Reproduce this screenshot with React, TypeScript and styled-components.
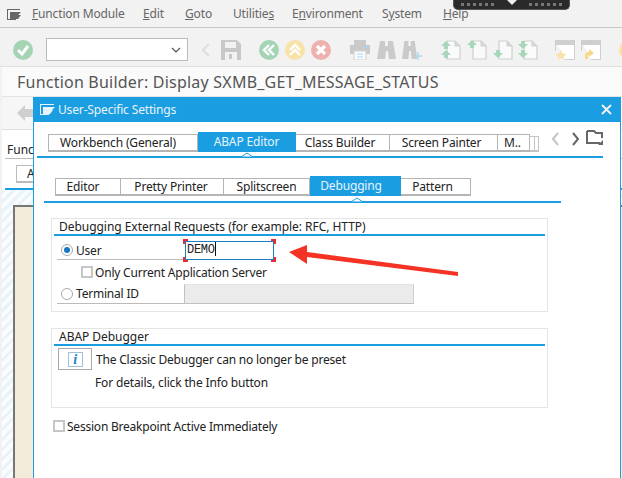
import React from 'react';
import styled, { createGlobalStyle } from 'styled-components';

const GlobalStyle = createGlobalStyle`
  html, body { margin: 0; padding: 0; background: #fff; }
  * { box-sizing: border-box; }
`;

const FONT = '"Noto Sans", "Open Sans", sans-serif';
const BLUE = '#1b9de2';

const Page = styled.div`
  position: relative;
  width: 622px;
  height: 478px;
  overflow: hidden;
  background: #f2f2f2;
  font-family: ${FONT};
  font-size: 12px;
  color: #222;
`;

const MenuBar = styled.div`
  display: flex;
  align-items: center;
  height: 28px;
  padding-left: 6px;
  border-bottom: 1px solid #c8c8c8;
  color: #666;
  letter-spacing: -0.15px;
`;

const MenuIcon = styled.svg`
  width: 16px;
  height: 12px;
  margin-right: 10px;
`;

const MenuItem = styled.span<{ $w: number }>`
  width: ${(p) => p.$w}px;
  white-space: nowrap;
  & u { text-underline-offset: 1px; }
`;

const ToolBar = styled.div`
  display: flex;
  align-items: center;
  height: 39px;
  padding: 5px 0 0 13px;
  border-bottom: 1px solid #e0e0e0;
`;

const ToolSlot = styled.svg<{ $ml?: number; $w?: number }>`
  flex: none;
  width: ${(p) => p.$w ?? 20}px;
  height: 20px;
  margin-left: ${(p) => p.$ml ?? 0}px;
`;

const Combo = styled.div`
  display: flex;
  align-items: center;
  justify-content: flex-end;
  flex: none;
  width: 142px;
  height: 23px;
  margin-left: 13px;
  padding-right: 6px;
  background: #fff;
  border: 1px solid #bbb;
`;

const TitleBar = styled.div`
  height: 30px;
  margin-left: 2px;
  padding: 4px 0 0 15px;
  background: #fafafa;
  border-bottom: 1px solid #e4e4e4;
  font-size: 16px;
  line-height: 22px;
  letter-spacing: 0.22px;
  color: #555;
  white-space: nowrap;
`;

const AppBar = styled.div`
  display: flex;
  align-items: center;
  height: 33px;
  margin-left: 2px;
  padding: 0 0 1px 15px;
  background: #f6f6f6;
  border-bottom: 1px solid #e0e0e0;
`;

const BackArrow = styled.svg`
  width: 20px;
  height: 16px;
`;

const BehindPanel = styled.div`
  height: 60px;
  margin-left: 2px;
  padding: 12px 0 0 3px;
  background: #fff;
`;

const BehindLabel = styled.div`
  height: 17px;
  padding-left: 2px;
  line-height: 16px;
  border-bottom: 1px solid #bbb;
  white-space: nowrap;
  overflow: hidden;
`;

const BehindButton = styled.div`
  width: 40px;
  height: 18px;
  margin: 6px 0 0 11px;
  padding-left: 10px;
  line-height: 15px;
  background: #fff;
  border: 1px solid #bbb;
  border-bottom-width: 2px;
`;

const BehindRule = styled.div`
  height: 2px;
  margin-top: 5px;
  background: ${BLUE};
`;

const HatchArea = styled.div`
  height: 288px;
  margin-left: 2px;
  padding: 15px 0 0 11px;
  background: repeating-linear-gradient(135deg, #e9f3fa 0 3px, #fbfcfe 3px 7px);
`;

const EditorBox = styled.div`
  height: 273px;
  background: #f2ebd9;
  border-top: 2px solid #777;
  border-left: 2px solid #777;
`;

const Handle = styled.div`
  position: absolute;
  top: 0;
  left: 453px;
  display: flex;
  align-items: flex-start;
  justify-content: center;
  gap: 12px;
  width: 117px;
  height: 10px;
  padding-top: 3px;
  background: #2a2a2a;
  border: 1px solid #555;
  border-top: none;
  border-radius: 0 0 5px 5px;
`;

const HandleDots = styled.span`
  width: 34px;
  height: 3px;
  background: repeating-linear-gradient(90deg, #777 0 3px, transparent 3px 6px);
`;

const HandleNotch = styled.span`
  width: 0;
  height: 0;
  margin-top: -3px;
  border-left: 5px solid transparent;
  border-right: 5px solid transparent;
  border-top: 5px solid #eee;
`;

const Dialog = styled.div`
  position: absolute;
  top: 97px;
  left: 33px;
  width: 588px;
  height: 381px;
  background: #fff;
  border-left: 1px solid ${BLUE};
  border-right: 1px solid ${BLUE};
`;

const DialogTitle = styled.div`
  display: flex;
  align-items: center;
  height: 25px;
  margin: 0 -1px;
  padding: 0 9px 0 7px;
  background: ${BLUE};
  color: #e8f4fb;
`;

const DialogCaption = styled.span`
  flex: 1;
  margin-left: 2px;
  letter-spacing: -0.15px;
`;

const TabHeader = styled.div`
  position: relative;
  display: flex;
  align-items: flex-start;
  height: 36px;
  margin: 0 17px 0 3px;
  padding: 10px 0 0 11px;
  border-bottom: 2px solid ${BLUE};
`;

const SubHeader = styled(TabHeader)`
  width: 517px;
  height: 45px;
  margin: 0 0 0 10px;
  padding: 18px 0 0 11px;
`;

const Tab = styled.div<{ $w: number; $pr?: number; $active?: boolean }>`
  flex: none;
  width: ${(p) => p.$w}px;
  height: ${(p) => (p.$active ? 20 : 18)}px;
  margin-top: ${(p) => (p.$active ? 0 : 2)}px;
  padding-right: ${(p) => p.$pr ?? 0}px;
  line-height: ${(p) => (p.$active ? 17 : 15)}px;
  letter-spacing: -0.15px;
  text-align: center;
  white-space: nowrap;
  overflow: hidden;
  background: ${(p) => (p.$active ? BLUE : '#fff')};
  color: ${(p) => (p.$active ? '#e8f4fb' : '#222')};
  border: 1px solid ${(p) => (p.$active ? BLUE : '#b4b4b4')};
  border-bottom-width: 2px;
  border-left-width: 0;
  &:first-child { border-left-width: 1px; }
`;

const TabStack = styled.span`
  flex: none;
  width: 9px;
  height: 16px;
  margin-top: 4px;
  background: #fff;
  border: 1px solid #c4c4c4;
  border-left: none;
  border-bottom-width: 2px;
  box-shadow: inset -3px 0 0 #fff, inset -4px 0 0 #c4c4c4;
`;

const TabNav = styled.svg`
  position: absolute;
  top: 8px;
  left: 513px;
  width: 56px;
  height: 18px;
`;

const Notch = styled.svg<{ $x: number }>`
  position: absolute;
  bottom: -1px;
  left: ${(p) => p.$x}px;
  width: 12px;
  height: 5px;
`;

const Group = styled.div<{ $h: number; $mt: number }>`
  width: 497px;
  height: ${(p) => p.$h}px;
  margin: ${(p) => p.$mt}px 0 0 17px;
  padding: 0 2px;
  border: 1px solid #e4e4e4;
`;

const GroupTitle = styled.div`
  height: 17px;
  padding-left: 5px;
  line-height: 16px;
  letter-spacing: -0.04px;
  border-bottom: 2px solid ${BLUE};
  white-space: nowrap;
`;

const Row = styled.div<{ $h: number; $inset?: boolean; $end?: boolean }>`
  display: flex;
  align-items: ${(p) => (p.$end ? 'flex-end' : 'center')};
  height: ${(p) => p.$h}px;
  padding-left: ${(p) => (p.$inset ? 3 : 0)}px;
  letter-spacing: -0.2px;
  white-space: nowrap;
`;

const LabelCell = styled.div<{ $pt?: number }>`
  display: flex;
  align-items: center;
  align-self: stretch;
  gap: 3px;
  flex: none;
  width: 127px;
  padding: ${(p) => p.$pt ?? 0}px 0 0 4px;
  border-bottom: 1px solid #bbb;
`;

const Radio = styled.span<{ $on?: boolean }>`
  flex: none;
  display: flex;
  align-items: center;
  justify-content: center;
  width: 12px;
  height: 12px;
  background: #fff;
  border: 1px solid #aaa;
  border-radius: 50%;
  &::after {
    content: '';
    width: 6px;
    height: 6px;
    border-radius: 50%;
    background: ${(p) => (p.$on ? '#1777c4' : 'transparent')};
  }
`;

const Check = styled.span<{ $ml?: number }>`
  flex: none;
  width: 12px;
  height: 12px;
  margin: 0 2px 0 ${(p) => p.$ml ?? 0}px;
  background: #fff;
  border: 2px solid #c6c6c6;
`;

const InputWrap = styled.div`
  position: relative;
  flex: none;
  width: 89px;
  height: 19px;
  margin-left: 1px;
  padding-left: 1px;
  border: 1px solid #1b7fc4;
  font-family: "Liberation Mono", monospace;
  line-height: 17px;
  letter-spacing: -0.3px;
`;

const Cursor = styled.span`
  display: inline-block;
  width: 1px;
  height: 14px;
  vertical-align: -3px;
  background: #111;
`;

const Corner = styled.span<{ $top?: boolean; $left?: boolean }>`
  position: absolute;
  width: 5px;
  height: 5px;
  ${(p) => (p.$top ? 'top: -3px;' : 'bottom: -3px;')}
  ${(p) => (p.$left ? 'left: -3px;' : 'right: -3px;')}
  border: 0 solid #ea2a32;
  ${(p) => (p.$top ? 'border-top-width: 2px;' : 'border-bottom-width: 2px;')}
  ${(p) => (p.$left ? 'border-left-width: 2px;' : 'border-right-width: 2px;')}
`;

const DisabledField = styled.div`
  flex: none;
  width: 230px;
  height: 20px;
  background: #ebebeb;
  border: 1px solid #c0c0c0;
  border-top-color: #e4e4e4;
  border-right-color: #d0d0d0;
`;

const InfoButton = styled.div`
  flex: none;
  display: flex;
  align-items: center;
  justify-content: center;
  width: 34px;
  height: 22px;
  margin: 0 4px 0 1px;
  background: #fff;
  border: 1px solid #aaa;
`;

const InfoGlyph = styled.span`
  display: block;
  width: 15px;
  height: 15px;
  border: 1px solid #9cc0de;
  font-family: "Liberation Serif", serif;
  font-style: italic;
  font-weight: 700;
  font-size: 14px;
  line-height: 13px;
  text-align: center;
  color: #1b7fc4;
`;

const DetailText = styled.div`
  height: 21px;
  padding-left: 41px;
  line-height: 22px;
  letter-spacing: -0.15px;
`;

const SessionRow = styled.div`
  display: flex;
  align-items: center;
  height: 16px;
  margin: 10px 0 0 19px;
  letter-spacing: -0.22px;
  white-space: nowrap;
`;

const ArrowOverlay = styled.svg`
  position: absolute;
  top: 235px;
  left: 280px;
  width: 190px;
  height: 50px;
  pointer-events: none;
`;

function DocArrows({ up, down, ml }: { up?: number[]; down?: number[]; ml?: number }) {
  return (
    <ToolSlot viewBox="0 0 20 20" $ml={ml}>
      <path d="M6 1h8l5 5v13H6z" fill="#fafafa" stroke="#cfcfcf" strokeWidth="1.2" />
      <path d="M14 1v5h5" fill="#d8d8d8" stroke="#cfcfcf" />
      {up?.map((y) => (
        <path key={`u${y}`} d={`M5 ${y}l5 5H7v3H3v-3H0z`} fill="#a8d6b8" />
      ))}
      {down?.map((y) => (
        <path key={`d${y}`} d={`M3 ${y}h4v3h3l-5 5-5-5h3z`} fill="#a8d6b8" />
      ))}
    </ToolSlot>
  );
}

function Binoculars({ ml, plus }: { ml?: number; plus?: boolean }) {
  return (
    <ToolSlot viewBox="0 0 20 20" $ml={ml}>
      <path d="M3 1h5v5h3V1h5l3 18h-7l-1-8H9l-1 8H0z" fill="#cacaca" transform={plus ? 'scale(.8 1)' : undefined} />
      {plus && <path d="M16 12v8M12 16h8" stroke="#a9d7f2" strokeWidth="1.3" />}
    </ToolSlot>
  );
}

function WindowIcon({ ml, star }: { ml?: number; star?: boolean }) {
  return (
    <ToolSlot viewBox="0 0 20 20" $ml={ml}>
      <path d="M.5 1h19v18.5H10" fill="#fff" stroke="#cfcfcf" />
      <path d="M.5 1v10" stroke="#cfcfcf" />
      <rect x="0" y="0" width="20" height="5" fill="#cfcfcf" />
      {star ? (
        <path d="M6 10l1.7 3.5 3.8.4-2.8 2.6.8 3.7L6 18l-3.5 2 .8-3.7L.5 13.9l3.8-.4z" fill="#f7e2a8" />
      ) : (
        <path d="M4 19v-5l2-2h2V9l5 4-5 4v-2H7v4z" fill="#f7d98e" />
      )}
    </ToolSlot>
  );
}

export default function App() {
  return (
    <Page>
      <GlobalStyle />
      <MenuBar>
        <MenuIcon viewBox="0 0 16 12">
          <path d="M1 1h13v1H2v9h8v1H1z" fill="#666" />
          <path d="M4 4h11l-3 3 3 0-3 4H4z" fill="#666" />
        </MenuIcon>
        <MenuItem $w={111}><u>F</u>unction Module</MenuItem>
        <MenuItem $w={42}><u>E</u>dit</MenuItem>
        <MenuItem $w={48}><u>G</u>oto</MenuItem>
        <MenuItem $w={59}>Utilitie<u>s</u></MenuItem>
        <MenuItem $w={90}>E<u>n</u>vironment</MenuItem>
        <MenuItem $w={61}>S<u>y</u>stem</MenuItem>
        <MenuItem $w={40}><u>H</u>elp</MenuItem>
      </MenuBar>

      <ToolBar>
        <ToolSlot viewBox="0 0 20 20">
          <circle cx="10" cy="10" r="10" fill="#a5d4b5" />
          <path d="M5 10l4 4 6-8" fill="none" stroke="#fff" strokeWidth="3" />
        </ToolSlot>
        <Combo>
          <svg width="10" height="6" viewBox="0 0 10 6">
            <path d="M1 1l4 4 4-4" fill="none" stroke="#555" strokeWidth="1.2" />
          </svg>
        </Combo>
        <ToolSlot viewBox="0 0 8 20" $ml={14} $w={8}>
          <path d="M7 4L1 10l6 6" fill="none" stroke="#ddd" strokeWidth="2" />
        </ToolSlot>
        <ToolSlot viewBox="0 0 20 20" $ml={11}>
          <path d="M0 0h16l4 4v16H0z" fill="#c8c8c8" />
          <rect x="4" y="2" width="11" height="6" fill="#f2f2f2" />
          <rect x="4" y="12" width="12" height="8" fill="#f2f2f2" />
          <rect x="8" y="14" width="3" height="5" fill="#c8c8c8" />
        </ToolSlot>
        <ToolSlot viewBox="0 0 20 20" $ml={18}>
          <circle cx="10" cy="10" r="10" fill="#a5d4b5" />
          <path d="M10 5l-5 5 5 5M15 5l-5 5 5 5" fill="none" stroke="#fff" strokeWidth="2.4" />
        </ToolSlot>
        <ToolSlot viewBox="0 0 20 20" $ml={6}>
          <circle cx="10" cy="10" r="10" fill="#f7e2a8" />
          <path d="M5 10l5-5 5 5M5 15l5-5 5 5" fill="none" stroke="#fff" strokeWidth="2.4" />
        </ToolSlot>
        <ToolSlot viewBox="0 0 20 20" $ml={6}>
          <circle cx="10" cy="10" r="10" fill="#eeb1ae" />
          <path d="M6 6l8 8M14 6l-8 8" fill="none" stroke="#fff" strokeWidth="3.2" />
        </ToolSlot>
        <ToolSlot viewBox="0 0 20 20" $ml={19}>
          <rect x="4" y="0" width="12" height="5" fill="#cacaca" />
          <rect x="0" y="5" width="20" height="9" fill="#cacaca" />
          <rect x="4" y="11" width="12" height="9" fill="#fafafa" stroke="#cfcfcf" />
          <path d="M7 14h6M7 17h6" stroke="#a9d7f2" />
          <rect x="15" y="6" width="4" height="2" fill="#a9d7f2" />
        </ToolSlot>
        <Binoculars ml={7} />
        <Binoculars ml={5} plus />
        <DocArrows ml={19} up={[1, 10]} />
        <DocArrows ml={6} up={[0]} />
        <DocArrows ml={6} down={[10]} />
        <DocArrows ml={5} down={[1, 10]} />
        <WindowIcon ml={17} star />
        <WindowIcon ml={6} />
        <ToolSlot viewBox="0 0 20 20" $ml={18}>
          <circle cx="10" cy="10" r="10" fill="#f7e2a8" />
        </ToolSlot>
      </ToolBar>

      <TitleBar>Function Builder: Display SXMB_GET_MESSAGE_STATUS</TitleBar>

      <AppBar>
        <BackArrow viewBox="0 0 20 16">
          <path d="M0 8l8-8v4h12v8H8v4z" fill="#cfcfcf" />
        </BackArrow>
      </AppBar>
      <BehindPanel>
        <BehindLabel>Function</BehindLabel>
        <BehindButton>A</BehindButton>
        <BehindRule />
      </BehindPanel>
      <HatchArea>
        <EditorBox />
      </HatchArea>

      <Handle>
        <HandleDots />
        <HandleNotch />
        <HandleDots />
      </Handle>

      <Dialog>
        <DialogTitle>
          <svg width="16" height="11" viewBox="0 0 16 11">
            <path d="M0 0h14v1H1v9h8v1H0z" fill="#e8f4fb" />
            <path d="M3 3h12l-3 3h1l-3 4H3z" fill="#e8f4fb" />
          </svg>
          <DialogCaption>User-Specific Settings</DialogCaption>
          <svg width="11" height="11" viewBox="0 0 11 11">
            <path d="M1 1l9 9M10 1l-9 9" stroke="#f0f0f0" strokeWidth="2" />
          </svg>
        </DialogTitle>

        <TabHeader>
          <Tab $w={150} $pr={10}>Workbench (General)</Tab>
          <Tab $w={98} $active>ABAP Editor</Tab>
          <Tab $w={94} $pr={5}>Class Builder</Tab>
          <Tab $w={108} $pr={4}>Screen Painter</Tab>
          <Tab $w={32} $pr={2}>M..</Tab>
          <TabStack />
          <TabNav viewBox="0 0 56 18">
            <path d="M8 3L3 9l5 6" fill="none" stroke="#c4c4c4" strokeWidth="2" />
            <path d="M23 3l5 6-5 6" fill="none" stroke="#666" strokeWidth="2" />
            <path d="M37 1h7l2 2h6v5M37 1v12h13" fill="none" stroke="#666" strokeWidth="2" />
            <path d="M53 10v5h-5z" fill="#666" />
          </TabNav>
          <Notch $x={204} viewBox="0 0 12 5">
            <path d="M0 5l6-4 6 4z" fill="#fff" stroke={BLUE} />
          </Notch>
        </TabHeader>

        <SubHeader>
          <Tab $w={66} $pr={10}>Editor</Tab>
          <Tab $w={103} $pr={2}>Pretty Printer</Tab>
          <Tab $w={86}>Splitscreen</Tab>
          <Tab $w={91} $pr={8} $active>Debugging</Tab>
          <Tab $w={70} $pr={6}>Pattern</Tab>
          <Notch $x={307} viewBox="0 0 12 5">
            <path d="M0 5l6-4 6 4z" fill="#fff" stroke={BLUE} />
          </Notch>
        </SubHeader>

        <Group $h={94} $mt={15}>
          <GroupTitle>Debugging External Requests (for example: RFC, HTTP)</GroupTitle>
          <Row $h={24} $inset $end>
            <LabelCell $pt={5}>
              <Radio $on />
              User
            </LabelCell>
            <InputWrap>
              DEMO<Cursor />
              <Corner $top $left />
              <Corner $top />
              <Corner $left />
              <Corner />
            </InputWrap>
          </Row>
          <Row $h={24}>
            <Check $ml={27} />
            Only Current Application Server
          </Row>
          <Row $h={20} $inset>
            <LabelCell>
              <Radio />
              Terminal ID
            </LabelCell>
            <DisabledField />
          </Row>
        </Group>

        <Group $h={80} $mt={16}>
          <GroupTitle>ABAP Debugger</GroupTitle>
          <Row $h={26} $inset>
            <InfoButton>
              <InfoGlyph>i</InfoGlyph>
            </InfoButton>
            The Classic Debugger can no longer be preset
          </Row>
          <DetailText>For details, click the Info button</DetailText>
        </Group>

        <SessionRow>
          <Check />
          Session Breakpoint Active Immediately
        </SessionRow>
      </Dialog>

      <ArrowOverlay viewBox="0 0 190 50">
        <path d="M9 17L27 10v7L178 37v4L27 22v7z" fill="#f43325" />
      </ArrowOverlay>
    </Page>
  );
}
